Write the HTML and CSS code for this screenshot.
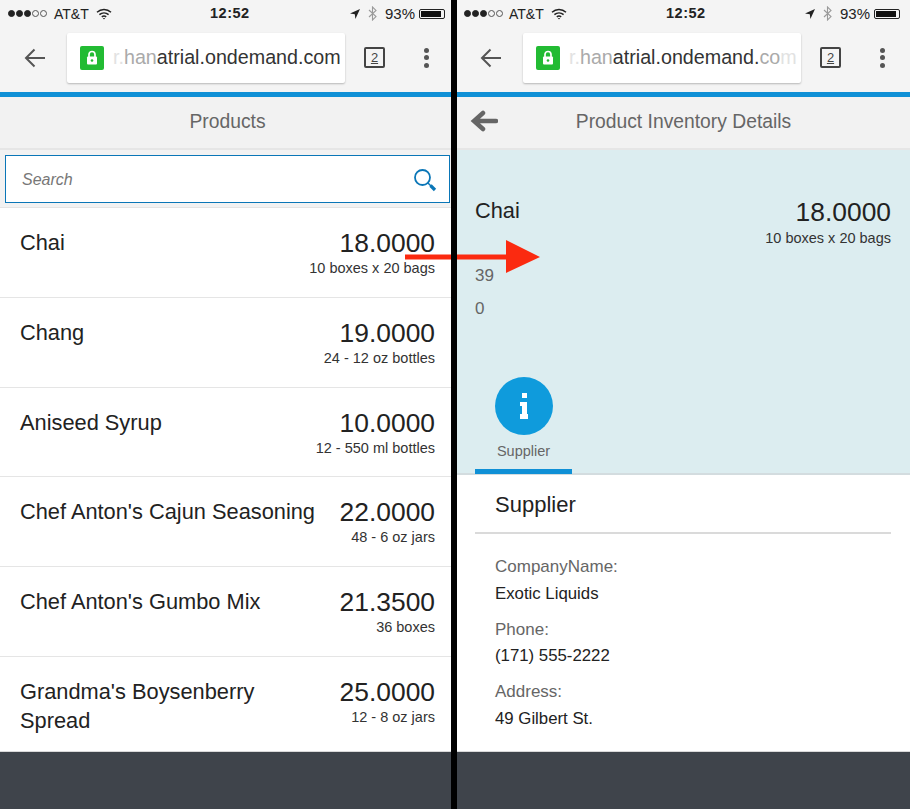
FILE: index.html
```html
<!DOCTYPE html>
<html lang="en">

<head>
    <meta charset="UTF-8">
    <title>Products</title>
    <link rel="stylesheet" href="styles.css">
</head>

<body>
    <div class="screens">
        <!-- left phone: product list, cut off a little by the divider -->
        <div class="phone phone-wide">
            <div class="status">
                <div class="status-left">
                    <span class="signal"><i></i><i></i><i></i><i class="off"></i><i class="off"></i></span>
                    <span>AT&amp;T</span>
                    <svg class="wifi" width="16" height="12" viewBox="0 0 16 12"><path d="M1 4.2C5 .6 11 .6 15 4.2M3.4 6.6c2.700-2.300 6.500-2.300 9.200 0M5.800 8.800c1.300-1 3.100-1 4.400 0" fill="none" stroke="#222" stroke-width="1.500"/><path d="M6.800 10 8 11.600 9.200 10z" fill="#222"/></svg>
                </div>
                <div class="status-time">12:52</div>
                <div class="status-right">
                    <svg width="10" height="10" viewBox="0 0 10 10"><path d="M10 0 0 4.600 4.800 5.200 5.400 10z" fill="#222"/></svg>
                    <svg class="bt" width="9" height="15" viewBox="0 0 9 15"><path d="M1 4 8 10.600 4.500 14V1L8 4.400 1 11" fill="none" stroke="#9a9a9a" stroke-width="1.100"/></svg>
                    <span class="percent">93%</span>
                    <span class="battery"><b></b></span>
                </div>
            </div>
            <div class="toolbar">
                <svg class="nav-back" width="22" height="20" viewBox="0 0 22 20"><path d="M21 10H2M10.500 1.500 2 10l8.500 8.500" fill="none" stroke="#555" stroke-width="2"/></svg>
                <div class="url">
                    <span class="lock"><svg width="12" height="15" viewBox="0 0 12 15"><path d="M3 7V4.500a3 3 0 0 1 6 0V7" fill="none" stroke="#fff" stroke-width="1.700"/><rect x="1" y="6.500" width="10" height="8" rx="1" fill="#fff"/><circle cx="6" cy="10.500" r="1.300" fill="#22bb33"/></svg></span>
                    <span class="url-text"><span class="fade-a">r.</span><span class="fade-b">han</span>atrial.ondemand.com</span>
                </div>
                <span class="tabs-count">2</span>
                <span class="menu-dots"><i></i><i></i><i></i></span>
            </div>
            <div class="progress"></div>
            <div class="title-bar">Products</div>
            <div class="search-wrap">
                <div class="search">
                    <span>Search</span>
                    <svg width="24" height="24" viewBox="0 0 24 24"><circle cx="9.500" cy="9.500" r="7.500" fill="none" stroke="#0a76b7" stroke-width="1.800"/><path d="M15 15l3 3" stroke="#0a76b7" stroke-width="1.500"/><path d="M17.500 17.500l4.500 4.500" stroke="#0a76b7" stroke-width="3.200"/></svg>
                </div>
            </div>
            <div class="list">
                <div class="item">
                    <div class="item-name">Chai</div>
                    <div class="item-info"><div class="price">18.0000</div><div class="unit">10 boxes x 20 bags</div></div>
                </div>
                <div class="item">
                    <div class="item-name">Chang</div>
                    <div class="item-info"><div class="price">19.0000</div><div class="unit">24 - 12 oz bottles</div></div>
                </div>
                <div class="item">
                    <div class="item-name">Aniseed Syrup</div>
                    <div class="item-info"><div class="price">10.0000</div><div class="unit">12 - 550 ml bottles</div></div>
                </div>
                <div class="item">
                    <div class="item-name">Chef Anton's Cajun Seasoning</div>
                    <div class="item-info"><div class="price">22.0000</div><div class="unit">48 - 6 oz jars</div></div>
                </div>
                <div class="item">
                    <div class="item-name">Chef Anton's Gumbo Mix</div>
                    <div class="item-info"><div class="price">21.3500</div><div class="unit">36 boxes</div></div>
                </div>
                <div class="item">
                    <div class="item-name">Grandma's Boysenberry Spread</div>
                    <div class="item-info"><div class="price">25.0000</div><div class="unit">12 - 8 oz jars</div></div>
                </div>
            </div>
            <div class="footer"></div>
        </div>

        <div class="divider"></div>

        <!-- right phone: details -->
        <div class="phone">
            <div class="status">
                <div class="status-left">
                    <span class="signal"><i></i><i></i><i></i><i class="off"></i><i class="off"></i></span>
                    <span>AT&amp;T</span>
                    <svg class="wifi" width="16" height="12" viewBox="0 0 16 12"><path d="M1 4.2C5 .6 11 .6 15 4.2M3.4 6.6c2.700-2.300 6.500-2.300 9.200 0M5.800 8.800c1.300-1 3.100-1 4.400 0" fill="none" stroke="#222" stroke-width="1.500"/><path d="M6.800 10 8 11.600 9.200 10z" fill="#222"/></svg>
                </div>
                <div class="status-time">12:52</div>
                <div class="status-right">
                    <svg width="10" height="10" viewBox="0 0 10 10"><path d="M10 0 0 4.600 4.800 5.200 5.400 10z" fill="#222"/></svg>
                    <svg class="bt" width="9" height="15" viewBox="0 0 9 15"><path d="M1 4 8 10.600 4.500 14V1L8 4.400 1 11" fill="none" stroke="#9a9a9a" stroke-width="1.100"/></svg>
                    <span class="percent">93%</span>
                    <span class="battery"><b></b></span>
                </div>
            </div>
            <div class="toolbar">
                <svg class="nav-back" width="22" height="20" viewBox="0 0 22 20"><path d="M21 10H2M10.500 1.500 2 10l8.500 8.500" fill="none" stroke="#555" stroke-width="2"/></svg>
                <div class="url">
                    <span class="lock"><svg width="12" height="15" viewBox="0 0 12 15"><path d="M3 7V4.500a3 3 0 0 1 6 0V7" fill="none" stroke="#fff" stroke-width="1.700"/><rect x="1" y="6.500" width="10" height="8" rx="1" fill="#fff"/><circle cx="6" cy="10.500" r="1.300" fill="#22bb33"/></svg></span>
                    <span class="url-text"><span class="fade-a">r.</span><span class="fade-b">han</span>atrial.ondemand.<span class="fade-b">co</span><span class="fade-a">m</span></span>
                </div>
                <span class="tabs-count">2</span>
                <span class="menu-dots"><i></i><i></i><i></i></span>
            </div>
            <div class="progress"></div>
            <div class="title-bar">
                <svg class="page-back" width="28" height="22" viewBox="0 0 28 22"><path d="M26 11H5M13 3 4 11l9 8" fill="none" stroke="#666" stroke-width="4.500" stroke-linecap="round"/></svg>
                Product Inventory Details
            </div>
            <div class="detail-head">
                <div class="detail-top">
                    <div class="detail-name">Chai</div>
                    <div class="item-info"><div class="price">18.0000</div><div class="unit">10 boxes x 20 bags</div></div>
                </div>
                <div class="stat">39</div>
                <div class="stat">0</div>
                <div class="tab">
                    <span class="tab-icon"><svg width="8" height="26" viewBox="0 0 8 26"><path d="M2 0h5v5H2zM0 9h7v12h1v5H0v-5h2v-8H0z" fill="#fff"/></svg></span>
                    <span class="tab-label">Supplier</span>
                </div>
            </div>
            <div class="detail-body">
                <div class="section-title">Supplier</div>
                <div class="field-label">CompanyName:</div>
                <div class="field-value">Exotic Liquids</div>
                <div class="field-label">Phone:</div>
                <div class="field-value">(171) 555-2222</div>
                <div class="field-label">Address:</div>
                <div class="field-value">49 Gilbert St.</div>
            </div>
            <div class="footer"></div>
        </div>
    </div>

    <svg class="red-arrow" width="136" height="34" viewBox="0 0 136 34"><path d="M0 14.500h101V0l34 17-34 16V19.500H0z" fill="#fb2a10"/></svg>
</body>

</html>
```

FILE: styles.css
```css
* {
    box-sizing: border-box;
}

body {
    margin: 0;
    font-family: "Liberation Sans", Arial, sans-serif;
    background-color: #fff;
    color: #222;
}

.screens {
    display: grid;
    grid-template-columns: 451px 6px 453px;
    height: 809px;
    overflow: hidden;
}

.divider {
    position: relative;
    z-index: 1;
    background-color: #000;
}

.phone {
    display: flex;
    flex-direction: column;
    height: 809px;
    overflow: hidden;
    background-color: #fff;
}

.phone-wide {
    width: 455px;
}

/* status bar */
.status {
    position: relative;
    display: flex;
    align-items: center;
    justify-content: space-between;
    height: 27px;
    padding: 0 10px 0 7px;
    background-color: #f4f4f4;
    font-size: 14px;
    color: #222;
}

.phone-wide .status {
    padding-left: 8px;
}

.status-left,
.status-right {
    display: flex;
    align-items: center;
    gap: 6px;
}

.phone-wide .status-left > span:nth-child(2) {
    margin-left: 1px;
}

.status-right {
    gap: 8px;
}

.status-left .wifi {
    margin-left: 1px;
}

.status-time {
    position: absolute;
    left: 209px;
    top: 5px;
    font-weight: bold;
    font-size: 14.500px;
    letter-spacing: 0.500px;
}

.phone-wide .status-time {
    left: 210px;
}

.percent {
    font-size: 15px;
}

.signal {
    display: flex;
    gap: 1px;
}

.signal i {
    width: 7px;
    height: 7px;
    border-radius: 50%;
    background-color: #222;
    border: 1px solid #222;
}

.signal i.off {
    background-color: transparent;
    border-color: #555;
}

.battery {
    display: inline-flex;
    width: 26px;
    height: 10px;
    margin-left: -4px;
    padding: 1px;
    border: 1px solid #222;
    border-radius: 2px;
}

.battery b {
    width: 92%;
    background-color: #111;
}

/* browser toolbar */
.toolbar {
    display: flex;
    align-items: center;
    height: 65px;
    background-color: #f4f4f4;
    padding: 0 0 4px 23px;
}

.phone-wide .toolbar {
    padding-left: 24px;
}

.nav-back {
    flex: none;
}

.url {
    display: flex;
    align-items: center;
    width: 278px;
    height: 50px;
    margin-left: 21px;
    padding-left: 13px;
    background-color: #fff;
    border-radius: 2px;
    box-shadow: 0 1px 2px rgba(0, 0, 0, 0.25);
    overflow: hidden;
    white-space: nowrap;
}

.lock {
    flex: none;
    display: flex;
    align-items: center;
    justify-content: center;
    width: 24px;
    height: 24px;
    background-color: #22bb33;
    border-radius: 2px;
}

.url-text {
    margin-left: 9px;
    font-size: 19.700px;
    color: #333;
}

.fade-a {
    color: #e2e2e2;
}

.fade-b {
    color: #aaa;
}

.tabs-count {
    flex: none;
    width: 21px;
    height: 21px;
    margin-left: 19px;
    border: 2px solid #444;
    border-radius: 2px;
    font-size: 13px;
    line-height: 17px;
    text-align: center;
    color: #444;
    text-decoration: underline;
}

.menu-dots {
    display: flex;
    flex-direction: column;
    gap: 2.500px;
    margin-left: 39px;
}

.menu-dots i {
    width: 5px;
    height: 5px;
    border-radius: 50%;
    background-color: #555;
}

.progress {
    height: 5px;
    background-color: #0f90d6;
}

.title-bar {
    position: relative;
    height: 53px;
    background-color: #f2f2f2;
    border-bottom: 2px solid #e6e6e6;
    font-size: 19.300px;
    line-height: 49px;
    text-align: center;
    color: #666;
}

.page-back {
    position: absolute;
    left: 13px;
    top: 13px;
}

/* list */
.search-wrap {
    height: 58px;
    padding: 5px;
    background-color: #f2f2f2;
    border-bottom: 1px solid #e4e4e4;
}

.search {
    display: flex;
    align-items: center;
    justify-content: space-between;
    height: 48px;
    padding: 1px 12px 0 16px;
    background-color: #fff;
    border: 1px solid #0a76b7;
    font-size: 16px;
    font-style: italic;
    color: #777;
}

.list {
    height: 543px;
    overflow: hidden;
}

.item {
    display: flex;
    justify-content: space-between;
    gap: 20px;
    height: 89.800px;
    padding: 20px 20px 0 20px;
    border-bottom: 1px solid #e5e5e5;
}

.item:last-child {
    border-bottom: none;
}

.item-name {
    font-size: 21.800px;
    line-height: 29px;
    color: #222;
}

.item-info {
    flex: none;
    text-align: right;
}

.price {
    font-size: 26.400px;
    line-height: 30px;
    color: #222;
}

.unit {
    padding-top: 1px;
    font-size: 14.500px;
    line-height: 18px;
    color: #333;
}

.footer {
    flex: 1;
    background-color: #3f444b;
    border-top: 1px solid #d9d9d9;
}

/* details */
.detail-head {
    height: 325px;
    padding: 46px 19px 0 18px;
    background-color: #dcedf0;
    border-bottom: 2px solid #d3dcdf;
}

.detail-top {
    display: flex;
    justify-content: space-between;
    height: 65px;
}

.detail-top .item-info {
    margin-top: 1px;
}

.detail-top .unit {
    padding-top: 2px;
}

.detail-name {
    font-size: 21.800px;
    line-height: 30px;
    color: #222;
}

.stat {
    height: 33px;
    font-size: 17px;
    line-height: 30px;
    color: #666;
}

.tab {
    display: flex;
    flex-direction: column;
    align-items: center;
    width: 97px;
    height: 97px;
    margin-top: 50px;
    border-bottom: 5px solid #0f90d6;
}

.tab-icon {
    display: flex;
    align-items: center;
    justify-content: center;
    width: 58px;
    height: 58px;
    border-radius: 50%;
    background-color: #0f9bdc;
}

.tab-label {
    margin-top: 8px;
    font-size: 14.500px;
    line-height: 16px;
    color: #666;
}

.detail-body {
    height: 276px;
    padding: 0 19px 0 18px;
    overflow: hidden;
}

.section-title {
    height: 59px;
    margin-bottom: 21px;
    padding-left: 20px;
    border-bottom: 2px solid #dadada;
    font-size: 22px;
    line-height: 59px;
    color: #222;
}

.field-label {
    padding-left: 20px;
    font-size: 17px;
    line-height: 24px;
    color: #666;
}

.field-value {
    margin: 2.500px 0 12.100px;
    padding-left: 20px;
    font-size: 16.800px;
    line-height: 24px;
    color: #222;
}

.red-arrow {
    position: absolute;
    left: 405px;
    top: 240px;
}
```
